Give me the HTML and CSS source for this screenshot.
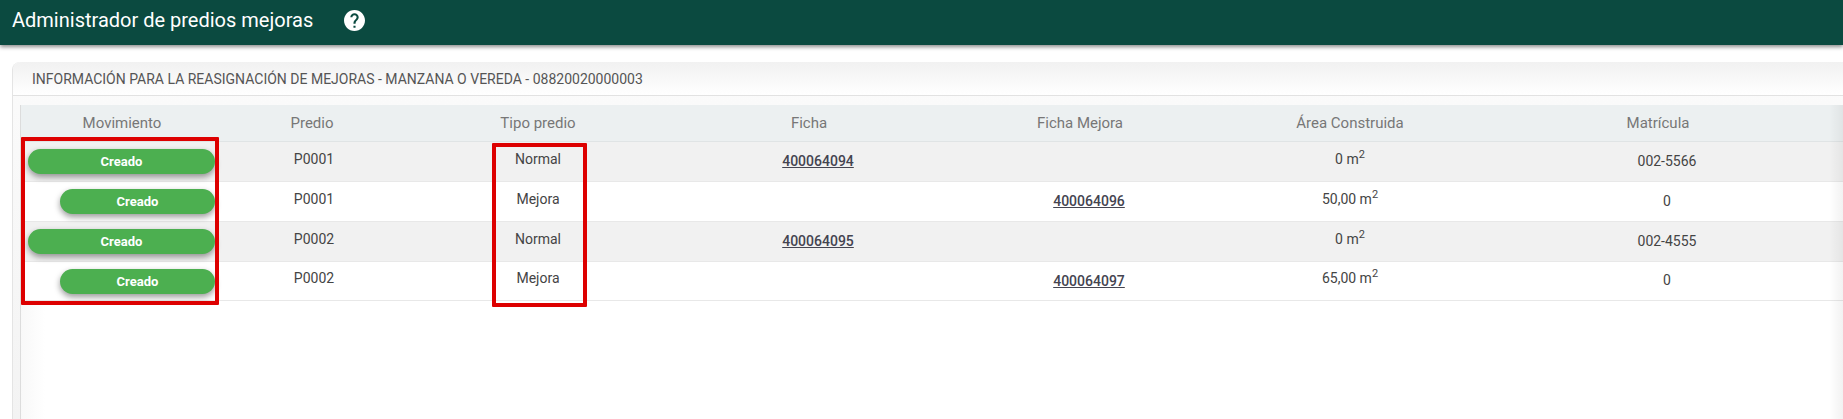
FILE: index.html
```html
<!DOCTYPE html>
<html lang="es">
<head>
  <meta charset="UTF-8">
  <title>Administrador de predios mejoras</title>
  <link rel="stylesheet" href="styles.css">
</head>
<body>
  <header class="topbar">
    <span class="topbar-title">Administrador de predios mejoras</span>
    <svg class="help-icon" viewBox="2 2 20 20" width="21" height="21">
      <path fill="#fff" d="M12 2C6.480 2 2 6.480 2 12s4.480 10 10 10 10-4.480 10-10S17.520 2 12 2zm1 17h-2v-2h2v2zm2.070-7.750l-.9.920C13.450 12.900 13 13.500 13 15h-2v-.5c0-1.100.45-2.100 1.170-2.830l1.240-1.260c.37-.36.59-.86.59-1.410 0-1.100-.9-2-2-2s-2 .9-2 2H8c0-2.210 1.790-4 4-4s4 1.790 4 4c0 .88-.36 1.680-.93 2.250z"/>
    </svg>
  </header>

  <section class="card">
    <div class="card-title">INFORMACIÓN PARA LA REASIGNACIÓN DE MEJORAS - MANZANA O VEREDA - 08820020000003</div>

    <div class="table-wrap">
      <table class="grid">
        <colgroup>
          <col class="col-mov">
          <col class="col-predio">
          <col class="col-tipo">
          <col class="col-ficha">
          <col class="col-mejora">
          <col class="col-area">
          <col class="col-mat">
        </colgroup>
        <thead>
          <tr>
            <th>Movimiento</th>
            <th>Predio</th>
            <th>Tipo predio</th>
            <th>Ficha</th>
            <th>Ficha Mejora</th>
            <th>Área Construida</th>
            <th class="th-mat">Matrícula</th>
          </tr>
        </thead>
        <tbody>
          <tr class="odd">
            <td class="mov"><button class="pill">Creado</button></td>
            <td class="up predio">P0001</td>
            <td class="up">Normal</td>
            <td class="link-cell"><a href="#">400064094</a></td>
            <td class="link-cell"></td>
            <td class="up">0 m<sup>2</sup></td>
            <td class="mat">002-5566</td>
          </tr>
          <tr>
            <td class="mov"><button class="pill short">Creado</button></td>
            <td class="up predio">P0001</td>
            <td class="up">Mejora</td>
            <td class="link-cell"></td>
            <td class="link-cell"><a href="#">400064096</a></td>
            <td class="up">50,00 m<sup>2</sup></td>
            <td class="mat">0</td>
          </tr>
          <tr class="odd">
            <td class="mov"><button class="pill">Creado</button></td>
            <td class="up predio">P0002</td>
            <td class="up">Normal</td>
            <td class="link-cell"><a href="#">400064095</a></td>
            <td class="link-cell"></td>
            <td class="up">0 m<sup>2</sup></td>
            <td class="mat">002-4555</td>
          </tr>
          <tr class="last">
            <td class="mov"><button class="pill short">Creado</button></td>
            <td class="up predio">P0002</td>
            <td class="up">Mejora</td>
            <td class="link-cell"></td>
            <td class="link-cell"><a href="#">400064097</a></td>
            <td class="up">65,00 m<sup>2</sup></td>
            <td class="mat">0</td>
          </tr>
        </tbody>
      </table>
      <div class="mark mark-mov"></div>
      <div class="mark mark-tipo"></div>
    </div>
  </section>
</body>
</html>
```

FILE: styles.css
```css
html, body {
  height: 100%;
}

body {
  margin: 0;
  background: #fff;
  color: #333;
  font-family: Roboto, "Liberation Sans", sans-serif;
  font-size: 14px;
  overflow: hidden;
}

.topbar {
  box-sizing: border-box;
  display: flex;
  align-items: center;
  height: 45px;
  padding: 0 0 5px 12px;
  background: #0b4a40;
  box-shadow: 0 2px 4px rgba(0,0,0,0.45);
}

.topbar-title {
  color: #fff;
  font-size: 20px;
  width: 332px;
}

.help-icon {
  display: block;
}

.card {
  margin: 17px 0 0 12px;
  height: 357px;
  background: linear-gradient(#fbfbfb, #f3f3f3);
  border-left: 1px solid #e4e4e4;
  border-radius: 8px 0 0 0;
}

.card-title {
  height: 33px;
  line-height: 35px;
  padding-left: 19px;
  font-size: 14px;
  color: #555;
  background: linear-gradient(#f1f1f1, #fff);
  border-bottom: 1px solid #e2e2e2;
  border-radius: 8px 0 0 0;
}

.table-wrap {
  position: relative;
  margin: 9px 0 0 7px;
  height: 314px;
  background: linear-gradient(90deg, #f8f8f8, #fff 24px);
  border-left: 1px solid #dcdcdc;
}

.table-wrap::after {
  content: "";
  position: absolute;
  top: 0;
  right: 0;
  bottom: 0;
  width: 14px;
  background: linear-gradient(90deg, rgba(0,0,0,0), rgba(0,0,0,0.05));
  pointer-events: none;
}

.grid {
  width: 1822px;
  border-collapse: collapse;
  table-layout: fixed;
}

.col-mov { width: 202px; }
.col-predio { width: 178px; }
.col-tipo { width: 274px; }
.col-ficha { width: 268px; }
.col-mejora { width: 274px; }
.col-area { width: 266px; }
.col-mat { width: 360px; }

.grid th {
  box-sizing: border-box;
  height: 36px;
  padding: 1px 0 0;
  background: #ecf0f1;
  color: #777;
  font-size: 15px;
  font-weight: 400;
  text-align: center;
  border-bottom: 1px solid #e0e4e5;
}

.grid th.th-mat {
  padding-right: 10px;
}

.grid td {
  box-sizing: border-box;
  height: 40px;
  padding: 0;
  text-align: center;
  color: #444;
  background: #fff;
  border-bottom: 1px solid #e8e8e8;
}

.grid tr.odd td {
  background: #f1f1f1;
}

.grid tr.last td {
  height: 39px;
}

.grid td.up {
  padding: 0 0 5px;
}

.grid td.predio {
  padding-left: 4px;
}

.grid td.mat {
  padding-left: 8px;
  padding-bottom: 1px;
}

.grid td.link-cell {
  padding-left: 18px;
}

.grid a {
  color: #444450;
  font-weight: 500;
  text-decoration: underline;
}

.grid sup {
  font-size: 11px;
  line-height: 0;
}

.grid td.mov {
  padding: 1px 8px 0 0;
  text-align: right;
}

.pill {
  display: inline-block;
  vertical-align: middle;
  width: 187px;
  height: 25px;
  padding: 0;
  border: none;
  border-radius: 13px;
  background: #4caf50;
  color: #fff;
  font-family: inherit;
  font-size: 13px;
  font-weight: 700;
  box-shadow: 0 3px 6px rgba(0,0,0,0.4);
}

.pill.short {
  width: 155px;
}

.mark {
  position: absolute;
  box-sizing: border-box;
  border: 4px solid #dd0000;
  border-radius: 1px;
}

.mark-mov {
  left: 0;
  top: 32px;
  width: 198px;
  height: 168px;
}

.mark-tipo {
  left: 471px;
  top: 38px;
  width: 95px;
  height: 164px;
}
```
